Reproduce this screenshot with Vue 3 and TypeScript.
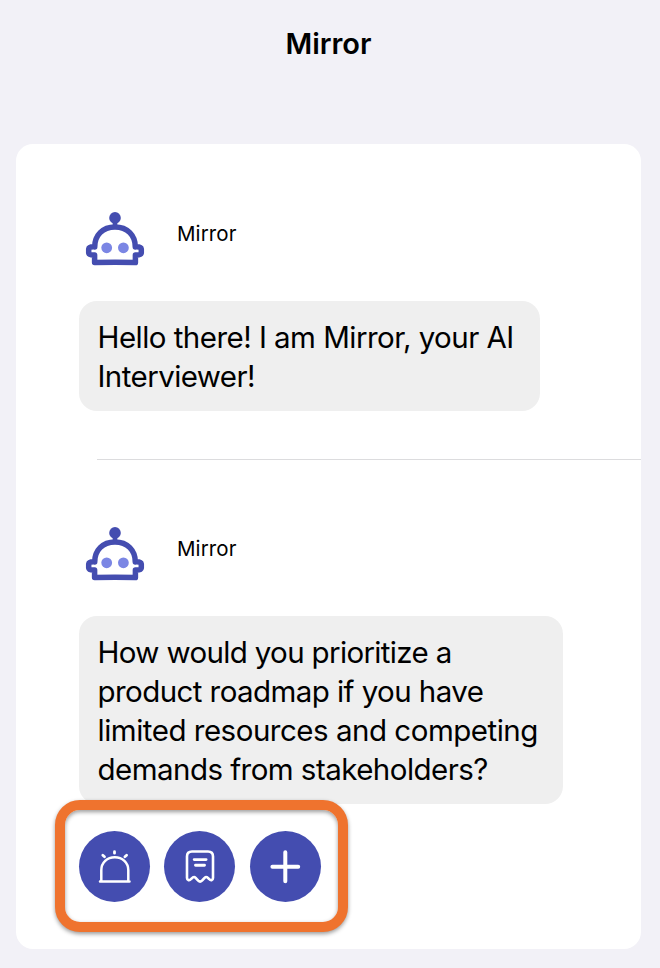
<script setup lang="ts">
interface Message {
  id: number
  author: string
  lines: string[]
}

const messages: Message[] = [
  { id: 1, author: 'Mirror', lines: ['Hello there! I am Mirror, your AI', 'Interviewer!'] },
  {
    id: 2,
    author: 'Mirror',
    lines: [
      'How would you prioritize a',
      'product roadmap if you have',
      'limited resources and competing',
      'demands from stakeholders?',
    ],
  },
]
</script>

<template>
  <div class="screen">
    <header class="title">Mirror</header>
    <main class="card">
      <section v-for="m in messages" :key="m.id" class="message" :class="'message-' + m.id">
        <div class="author">
          <svg class="avatar" viewBox="0 0 60 56" fill="none">
            <path
              d="M30 16C17.500 16 9.700 24.500 9.700 35.900Q4 35.600 3.700 38V41.800Q4 44.300 9.600 44V51.600Q30 50.900 50.400 51.600V44Q56 44.300 56.300 41.800V38Q56 35.600 50.300 35.900C50.300 24.500 42.500 16 30 16Z"
              stroke="#444db0" stroke-width="5.500" stroke-linejoin="round"
            />
            <path d="M30 7V15" stroke="#444db0" stroke-width="4.600" />
            <circle cx="30" cy="6.900" r="5.800" fill="#444db0" />
            <circle cx="21.700" cy="36.800" r="5.400" fill="#7b86e4" />
            <circle cx="38.400" cy="36.800" r="5.400" fill="#7b86e4" />
          </svg>
          <span class="name">{{ m.author }}</span>
        </div>
        <p class="bubble">
          <span v-for="(line, i) in m.lines" :key="i" class="line" :class="'line-' + i">{{ line }}</span>
        </p>
      </section>
      <div class="actions">
        <button class="action" type="button" aria-label="Alert">
          <svg viewBox="0 0 71 71" fill="none" stroke="#fff" stroke-width="2.500" stroke-linecap="round">
            <path d="M21 50.500H50.500M22.300 50V39.300C22.300 31.500 28.200 26.300 35.800 26.300S49.300 31.500 49.300 39.300V50" />
            <path d="M35.500 20.700V22.200M23.800 24.200L25.500 25.700M47.600 24.200L45.900 25.700" stroke-width="2.800" />
          </svg>
        </button>
        <button class="action" type="button" aria-label="Notes">
          <svg viewBox="0 0 71 71" fill="none" stroke="#fff" stroke-width="2.600" stroke-linecap="round" stroke-linejoin="round">
            <g transform="translate(0.500 0)">
              <path d="M22.500 47V25.500Q22.500 20.500 27.500 20.500H43.500Q48.500 20.500 48.500 25.500V47C48.500 49.400 46.200 49.900 44.600 48L42.800 46.400Q41.500 45.400 40.100 46.800L37.500 49.700Q35.600 51.600 33.700 49.700L31.100 46.800Q29.800 45.400 28.400 46.400L26.600 48C25 49.900 22.500 49.400 22.500 47Z" />
              <path d="M29.700 28.600H41.600M31 34.300H40" stroke-width="2.900" />
            </g>
          </svg>
        </button>
        <button class="action" type="button" aria-label="Add">
          <svg viewBox="0 0 71 71" fill="none" stroke="#fff" stroke-width="4" stroke-linecap="round">
            <path d="M35.300 21.200V50.200M22.400 35.800H48.200" />
          </svg>
        </button>
      </div>
    </main>
  </div>
</template>

<style>
body {
  margin: 0;
  background: #f2f1f7;
}
</style>

<style scoped>
.screen {
  box-sizing: border-box;
  width: 660px;
  height: 968px;
  padding: 0 19px 19px 16px;
  background: #f2f1f7;
  color: #000;
  font-family: Inter, "Liberation Sans", sans-serif;
  overflow: hidden;
}
.title {
  box-sizing: border-box;
  height: 144px;
  padding-top: 25px;
  font-size: 29px;
  line-height: 38px;
  font-weight: 600;
  letter-spacing: -0.050px;
  text-align: center;
}
.card {
  display: flex;
  flex-direction: column;
  box-sizing: border-box;
  height: 805px;
  border-radius: 17px;
  background: #fff;
}
.message {
  box-sizing: border-box;
  height: 315px;
  margin-left: 81px;
  padding-top: 67px;
}
.message + .message {
  height: 345px;
  padding-top: 66px;
  border-top: 1px solid #dcdcde;
}
.author {
  display: flex;
  height: 90px;
  margin-left: -12px;
}
.avatar {
  width: 60px;
  height: 56px;
}
.name {
  margin-left: 32px;
  padding-top: 10px;
  font-size: 20.500px;
  line-height: 26px;
  letter-spacing: 0.100px;
}
.bubble {
  box-sizing: border-box;
  width: 461px;
  height: 110px;
  margin: 0 0 0 -18px;
  padding: 17px 18px 16px 18.500px;
  border-radius: 18px;
  background: #efefef;
  font-size: 29.500px;
  line-height: 39px;
  letter-spacing: -0.530px;
}
.message-2 .bubble {
  width: 484px;
  height: 188px;
}
.line {
  display: block;
  white-space: nowrap;
}
.message-1 .line-1 {
  letter-spacing: -0.570px;
}
.message-2 .line-0 {
  letter-spacing: -0.650px;
}
.message-2 .line-1 {
  letter-spacing: -0.570px;
}
.message-2 .line-2 {
  letter-spacing: -0.490px;
}
.message-2 .line-3 {
  letter-spacing: -0.540px;
}
.actions {
  position: relative;
  display: flex;
  gap: 14.250px;
  align-self: flex-start;
  box-sizing: border-box;
  width: 293px;
  height: 132px;
  margin: -4px 0 0 39px;
  padding: 21px 14px;
  border: 10px solid #ef732e;
  border-radius: 25px;
  background: #fff;
  box-shadow: 0 2px 4px rgba(0, 0, 0, 0.400), inset 0 2px 4px rgba(0, 0, 0, 0.400);
}
.action {
  flex: none;
  width: 71px;
  height: 71px;
  padding: 0;
  border: 0;
  border-radius: 50%;
  background: #444db0;
}
.action svg {
  display: block;
  width: 71px;
  height: 71px;
}
</style>
